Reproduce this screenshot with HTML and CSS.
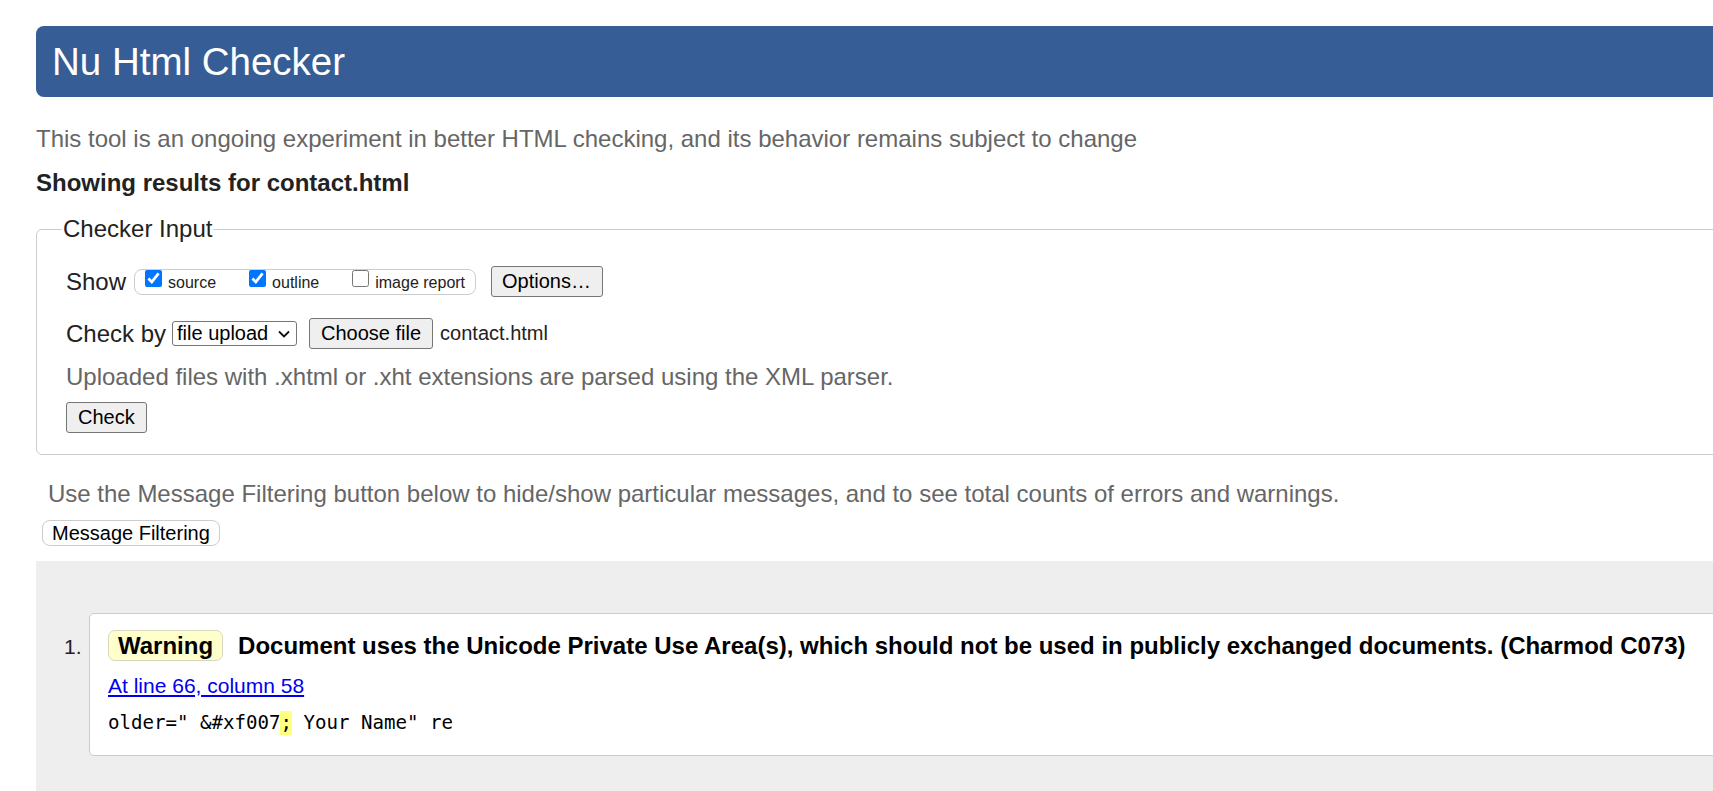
FILE: index.html
```html
<!DOCTYPE html>
<html lang="en">
<head>
<meta charset="utf-8">
<title>Showing results for contact.html - Nu Html Checker</title>
<link rel="stylesheet" href="styles.css">
</head>
<body>
<div class="page">
  <h1 class="banner">Nu Html Checker</h1>
  <p class="intro">This tool is an ongoing experiment in better HTML checking, and its behavior remains subject to change</p>
  <p class="showing">Showing results for contact.html</p>

  <fieldset class="checker">
    <legend class="checker-legend">Checker Input</legend>
    <div class="row row-show">
      <span class="row-label">Show</span>
      <span class="pill">
        <label class="opt"><input type="checkbox" class="cb" checked><span class="opt-text">source</span></label>
        <label class="opt"><input type="checkbox" class="cb" checked><span class="opt-text">outline</span></label>
        <label class="opt"><input type="checkbox" class="cb"><span class="opt-text">image report</span></label>
      </span>
      <button class="btn btn-options" type="button">Options…</button>
    </div>
    <div class="row row-checkby">
      <span class="row-label">Check by</span>
      <span class="sel-wrap">
        <select class="sel"><option>file upload</option></select>
        <svg class="sel-arrow" width="12" height="8" viewBox="0 0 12 8" aria-hidden="true"><path d="M1 1.5 L6 6.5 L11 1.5" fill="none" stroke="#111" stroke-width="1.8"/></svg>
      </span>
      <button class="btn btn-file" type="button">Choose file</button>
      <span class="file-name">contact.html</span>
    </div>
    <p class="hint">Uploaded files with .xhtml or .xht extensions are parsed using the XML parser.</p>
    <div class="row row-submit">
      <button class="btn btn-check" type="submit">Check</button>
    </div>
  </fieldset>

  <p class="filter-note">Use the Message Filtering button below to hide/show particular messages, and to see total counts of errors and warnings.</p>
  <button class="btn-filter" type="button">Message Filtering</button>

  <div class="results">
    <div class="msg-row">
      <span class="num">1.</span>
      <div class="card">
        <div class="card-head">
          <span class="badge">Warning</span>
          <span class="msg-text">Document uses the Unicode Private Use Area(s), which should not be used in publicly exchanged documents. (Charmod C073)</span>
        </div>
        <p class="loc"><a href="#l66c58" class="loc-link">At line 66, column 58</a></p>
        <p class="extract"><code class="code">older="&nbsp;&amp;#xf007<b class="hl">;</b> Your Name" re</code></p>
      </div>
    </div>
  </div>
</div>
</body>
</html>
```

FILE: styles.css
```css
html, body {
  margin: 0;
  padding: 0;
  overflow: hidden;
  background: #fff;
}

body {
  font-family: "Liberation Sans", Arial, sans-serif;
  color: #222;
}

.page {
  width: 1760px;
  padding: 26px 0 0 36px;
}

.banner {
  margin: 0;
  height: 71px;
  line-height: 72px;
  padding-left: 16px;
  background: #365d95;
  color: #fff;
  font-size: 38.5px;
  font-weight: normal;
  border-radius: 8px 0 0 8px;
}

.intro {
  margin: 28px 0 0;
  font-size: 24px;
  line-height: 28px;
  color: #666;
}

.showing {
  margin: 16px 0 0;
  font-size: 24px;
  line-height: 28px;
  font-weight: bold;
  color: #222;
}

.checker {
  margin: 18px 0 0;
  padding: 23px 29px 21px;
  border: 1px solid #ccc;
  border-radius: 6px;
}

.checker-legend {
  margin-left: -4px;
  padding: 0 1px;
  font-size: 24px;
  line-height: 28px;
  color: #222;
}

.row {
  display: flex;
  align-items: center;
}

.row-show {
  height: 31px;
}

.row-checkby {
  height: 31px;
  margin-top: 21px;
}

.row-label {
  font-size: 24px;
  line-height: 28px;
  color: #222;
}

.pill {
  display: inline-flex;
  align-items: flex-start;
  box-sizing: border-box;
  height: 26px;
  margin-left: 8px;
  padding: 0 10px 0 10px;
  border: 1px solid #ccc;
  border-radius: 8px;
  gap: 33px;
}

.opt {
  display: inline-flex;
  align-items: flex-start;
  gap: 6px;
}

.cb {
  width: 17px;
  height: 17px;
  margin: 0;
}

.opt-text {
  margin-top: 4px;
  font-size: 16px;
  line-height: 18px;
  color: #222;
}

.btn {
  box-sizing: border-box;
  height: 31px;
  padding: 0 11px 0 10px;
  font-family: "Liberation Sans", Arial, sans-serif;
  font-size: 20px;
  color: #000;
  background: #efefef;
  border: 1px solid #767676;
  border-radius: 3px;
}

.btn-options {
  margin-left: 15px;
}

.sel-wrap {
  position: relative;
  display: inline-flex;
  margin-left: 6px;
}

.sel {
  appearance: none;
  -webkit-appearance: none;
  box-sizing: border-box;
  width: 125px;
  height: 25px;
  margin: 0;
  padding: 0 0 0 4px;
  font-family: "Liberation Sans", Arial, sans-serif;
  font-size: 20px;
  line-height: 23px;
  color: #000;
  background: #fff;
  border: 1px solid #767676;
  border-radius: 3px;
}

.sel-arrow {
  position: absolute;
  right: 7px;
  top: 9px;
  pointer-events: none;
}

.btn-file {
  margin-left: 12px;
  padding: 0 11px;
}

.file-name {
  margin-left: 7px;
  font-size: 20px;
  color: #222;
}

.hint {
  margin: 14px 0 0;
  font-size: 24px;
  line-height: 28px;
  color: #666;
}

.row-submit {
  margin-top: 11px;
}

.btn-check {
  padding: 0 11px;
}

.filter-note {
  margin: 25px 0 0 12px;
  font-size: 24px;
  line-height: 28px;
  color: #666;
}

.btn-filter {
  display: block;
  box-sizing: border-box;
  height: 26px;
  margin: 12px 0 0 6px;
  padding: 0 9px;
  font-family: "Liberation Sans", Arial, sans-serif;
  font-size: 20px;
  color: #000;
  background: #fff;
  border: 1px solid #ccc;
  border-radius: 8px;
}

.results {
  margin-top: 15px;
  padding: 52px 0 80px 28px;
  background: #eee;
}

.msg-row {
  display: flex;
  align-items: flex-start;
}

.num {
  flex: 0 0 25px;
  margin-top: 18px;
  font-size: 21px;
  line-height: 31px;
  color: #222;
}

.card {
  flex: 1;
  padding: 16px 18px 19px;
  background: #fff;
  border: 1px solid #ccc;
  border-radius: 5px;
}

.card-head {
  display: flex;
  align-items: center;
  height: 31px;
}

.badge {
  padding: 0 9px;
  font-size: 24px;
  line-height: 29px;
  font-weight: bold;
  color: #000;
  background: #ffc;
  border: 1px solid #d8d8c0;
  border-radius: 7px;
}

.msg-text {
  margin-left: 15px;
  font-size: 24px;
  font-weight: bold;
  color: #000;
  white-space: nowrap;
}

.loc {
  margin: 13px 0 0;
  font-size: 21px;
  line-height: 24px;
}

.loc-link {
  color: #00e;
  text-decoration: underline;
}

.extract {
  margin: 13px 0 0;
  line-height: 24px;
}

.code {
  font-family: "DejaVu Sans Mono", "Liberation Mono", monospace;
  font-size: 19.1px;
  color: #000;
  white-space: pre;
}

.hl {
  display: inline-block;
  font-weight: normal;
  line-height: 24px;
  background: #ffff80;
}
```
